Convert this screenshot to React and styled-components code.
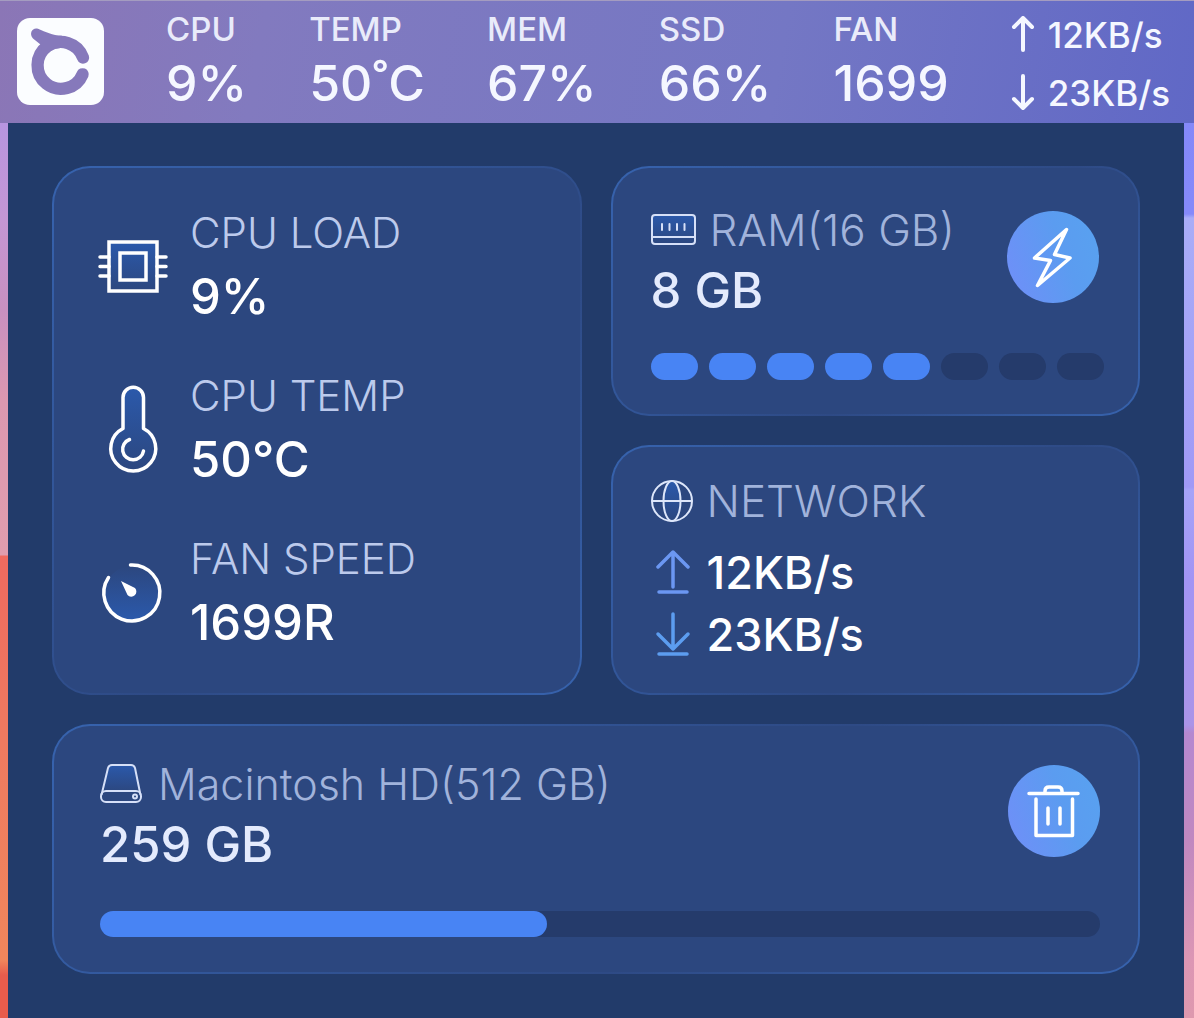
import React from "react";
import styled, { createGlobalStyle } from "styled-components";

const Global = createGlobalStyle`
  * { box-sizing: border-box; }
  body {
    margin: 0;
    font-family: Inter, "Liberation Sans", sans-serif;
    color: #fff;
  }
`;

const Desktop = styled.div`
  min-height: 100vh;
  display: flex;
  flex-direction: column;
  background:
    linear-gradient(#b795e0 0, #b795e0 120px, #c496d4 220px, #c890c0 310px, #dc98b0 400px, #e09dae 555px, #ef6a5f 556px, #ef7a60 740px, #f0865c 960px, #e85c4c 975px, #e85c4c) left / 50% 100% no-repeat,
    linear-gradient(#8388f8 0, #8589fa 214px, #a9adf8 218px, #a099f6 487px, #a5a3f8 490px, #a294f4 580px, #aa94e8 725px, #b588d0 733px, #c088c0 840px, #dc96b4 960px, #de98ae) right / 50% 100% no-repeat;
`;

const MenuBar = styled.header`
  display: flex;
  justify-content: space-between;
  height: 123px;
  padding: 0 24px 0 17px;
  border-top: 1px solid #a49cc0;
  background: linear-gradient(100deg, #8b76b6 0%, #827abf 22%, #7477c4 65%, #6068c6 100%);
`;

const Logo = styled.svg`
  width: 87px;
  height: 87px;
  margin-top: 17px;
`;

const Stat = styled.div`
  display: flex;
  flex-direction: column;
  padding-top: 8px;
`;

const StatName = styled.span`
  font-size: 33px;
  line-height: 40px;
  font-weight: 500;
  color: #e9ebfa;
`;

const StatValue = styled.span`
  font-size: 50px;
  line-height: 68px;
  font-weight: 500;
  color: #f5f7ff;
`;

const Rates = styled.div`
  display: flex;
  flex-direction: column;
  padding-top: 5px;
`;

const Rate = styled.span`
  display: flex;
  align-items: center;
  gap: 13px;
  font-size: 35px;
  line-height: 58px;
  font-weight: 500;
  color: #f5f7ff;
`;

const RateArrow = styled.svg`
  width: 24px;
  height: 38px;
`;

const Panel = styled.main`
  flex: 1;
  display: grid;
  grid-template-columns: 1fr 1fr;
  align-content: start;
  gap: 29px;
  margin: 0 10px 0 8px;
  padding: 43px 44px;
  background: #223b6a;
`;

const Card = styled.section`
  min-height: 250px;
  padding: ${(p) => p.$pad || "38px"};
  grid-column: ${(p) => (p.$wide ? "1 / -1" : "auto")};
  grid-row: ${(p) => (p.$tall ? "span 2" : "auto")};
  border: 2px solid transparent;
  border-radius: 38px;
  background:
    linear-gradient(#2c477f, #2c477f) padding-box,
    linear-gradient(135deg, #3763ae 0%, #325699 30%, #2e4a85 60%, #3763ae 100%) border-box;
`;

const Readings = styled.dl`
  display: flex;
  flex-direction: column;
  gap: 35px;
  margin: 0;
`;

const Reading = styled.div`
  display: grid;
  grid-template-columns: 70px 1fr;
  column-gap: 22px;
  align-items: center;
`;

const ReadingIcon = styled.svg`
  grid-row: span 2;
  width: 70px;
  height: 90px;
`;

const ReadingName = styled.dt`
  font-size: 42px;
  line-height: 64px;
  font-weight: 300;
  color: #bccaec;
`;

const ReadingValue = styled.dd`
  margin: 0;
  font-size: 49px;
  line-height: 64px;
  font-weight: 500;
`;

const CardHead = styled.div`
  display: flex;
  justify-content: space-between;
  align-items: flex-start;
`;

const Title = styled.h2`
  display: flex;
  align-items: center;
  gap: ${(p) => (p.$small ? 16 : 14)}px;
  margin: 0;
  font-size: ${(p) => (p.$small ? 43 : 44)}px;
  line-height: 52px;
  font-weight: 300;
  color: #a1b3db;
`;

const TitleIcon = styled.svg`
  width: ${(p) => p.$w}px;
  height: 46px;
`;

const Amount = styled.p`
  margin: 0;
  font-size: 49px;
  line-height: 70px;
  font-weight: 500;
  color: #e4ebfd;
`;

const RoundButton = styled.button`
  width: 92px;
  height: 92px;
  margin-top: 7px;
  margin-right: ${(p) => p.$inset || 0}px;
  padding: 0;
  border: 0;
  border-radius: 50%;
  background: linear-gradient(70deg, #6f8ff8 5%, #5b9cf0 60%, #58a2f0 100%);
  cursor: pointer;

  svg { display: block; }
`;

const Pills = styled.div`
  display: grid;
  grid-template-columns: repeat(8, 1fr);
  gap: 11px;
  margin-top: 27px;
`;

const Pill = styled.span`
  height: 27px;
  border-radius: 14px;
  background: ${(p) => (p.$on ? "#4884f4" : "#253b6b")};
`;

const Speeds = styled.div`
  display: flex;
  flex-direction: column;
  padding-top: 15px;
`;

const Speed = styled.p`
  display: flex;
  align-items: center;
  gap: 14px;
  margin: 0;
  font-size: 45px;
  line-height: 62px;
  font-weight: 500;
`;

const SpeedIcon = styled.svg`
  width: 42px;
  height: 46px;
`;

const Track = styled.div`
  height: 26px;
  margin-top: 31px;
  border-radius: 13px;
  background: #253b6b;
`;

const Fill = styled.div`
  height: 100%;
  border-radius: 13px;
  background: #4884f4;
`;

const diskUsed = 44.7;

const stats = [
  ["CPU", "9%"],
  ["TEMP", "50˚C"],
  ["MEM", "67%"],
  ["SSD", "66%"],
  ["FAN", "1699"],
];

const Glow = ({ id, up }) => (
  <defs>
    <linearGradient id={id} x1="0" x2="0" y1={up ? 1 : 0} y2={up ? 0 : 1}>
      <stop offset="0" stopColor="#2b59ab" />
      <stop offset="1" stopColor="#2c477f" />
    </linearGradient>
  </defs>
);

const ChipIcon = () => (
  <ReadingIcon viewBox="0 0 70 90" fill="none" stroke="#fff" strokeWidth="3.5" strokeLinecap="round">
    <Glow id="chip" />
    <rect x="11" y="22" width="48" height="49" fill="url(#chip)" />
    <rect x="22" y="33" width="26" height="27" />
    <path d="M2 37h9M2 46.500h9M2 56h9M59 37h9M59 46.500h9M59 56h9" />
  </ReadingIcon>
);

const ThermometerIcon = () => (
  <ReadingIcon viewBox="0 0 70 90" fill="none" stroke="#fff" strokeWidth="3.5" strokeLinecap="round" strokeLinejoin="round">
    <Glow id="thermo" />
    <path d="M25 45.500V14.500a10.250 10.250 0 0 1 20.500 0V45.500a22.500 22.500 0 1 1-20.500 0z" fill="url(#thermo)" />
    <path d="M31.500 56.500a10.500 10.500 0 1 0 14 11.500" />
  </ReadingIcon>
);

const GaugeIcon = () => (
  <ReadingIcon viewBox="0 0 70 90" fill="none" stroke="#fff" strokeWidth="3.5" strokeLinecap="round">
    <Glow id="gauge" up />
    <circle cx="33.500" cy="47" r="27" fill="url(#gauge)" stroke="none" />
    <path d="M32.500 19a28 28 0 1 1-22 12.500" />
    <path d="M23 35l14 7a5 5 0 1 1-7.500 7z" fill="#fff" stroke="none" />
  </ReadingIcon>
);

const Arrow = ({ down }) => (
  <RateArrow viewBox="0 0 24 38" fill="none" stroke="#f5f7ff" strokeWidth="4" strokeLinecap="round" strokeLinejoin="round">
    <path d={down ? "M12 2v32M3 25l9 9 9-9" : "M12 34V2M3 11l9-9 9 9"} />
  </RateArrow>
);

export default function App() {
  return (
    <>
      <Global />
      <Desktop>
        <MenuBar>
          <Logo viewBox="0 0 87 87" role="img" aria-label="Logo">
            <rect width="87" height="87" rx="13" fill="#fbfdff" />
            <path d="M66 39.500A23.400 23.400 0 1 0 65.600 56.300" fill="none" stroke="#8679bb" strokeWidth="12.300" strokeLinecap="round" />
            <path d="M21 10.800C29 14 35 17.500 45 17.700L43 30 25 33 23.500 26.500 16 20.500C11.500 15.500 15.500 9 21 10.800z" fill="#8679bb" />
          </Logo>
          {stats.map(([name, value]) => (
            <Stat key={name}>
              <StatName>{name}</StatName>
              <StatValue>{value}</StatValue>
            </Stat>
          ))}
          <Rates>
            <Rate><Arrow />12KB/s</Rate>
            <Rate><Arrow down />23KB/s</Rate>
          </Rates>
        </MenuBar>

        <Panel>
          <Card $tall $pad="33px 44px">
            <Readings>
              <Reading>
                <ChipIcon />
                <ReadingName>CPU LOAD</ReadingName>
                <ReadingValue>9%</ReadingValue>
              </Reading>
              <Reading>
                <ThermometerIcon />
                <ReadingName>CPU TEMP</ReadingName>
                <ReadingValue>50°C</ReadingValue>
              </Reading>
              <Reading>
                <GaugeIcon />
                <ReadingName>FAN SPEED</ReadingName>
                <ReadingValue>1699R</ReadingValue>
              </Reading>
            </Readings>
          </Card>

          <Card $pad="36px 34px 32px 38px">
            <CardHead>
              <div>
                <Title>
                  <TitleIcon $w={45} viewBox="0 0 45 46" fill="none" stroke="#d6e0f8" strokeWidth="2" strokeLinecap="round">
                    <Glow id="ram" />
                    <rect x="1" y="8" width="43" height="29" rx="3" fill="url(#ram)" />
                    <path d="M1 30h43M11 17v6M18.500 17v6M26 17v6M33.500 17v6" />
                  </TitleIcon>
                  RAM(16 GB)
                </Title>
                <Amount>8 GB</Amount>
              </div>
              <RoundButton type="button" aria-label="Free memory" $inset={5}>
                <svg width="92" height="92" viewBox="0 0 92 92" fill="none" stroke="#fff" strokeWidth="3.5" strokeLinejoin="round">
                  <path d="M59.500 18.500L27.500 47l16 2.500L30.500 74.500 63 47l-15.500-3.500z" />
                </svg>
              </RoundButton>
            </CardHead>
            <Pills role="meter" aria-label="Memory used" aria-valuenow={5} aria-valuemin={0} aria-valuemax={8}>
              {Array.from({ length: 8 }, (_, i) => <Pill key={i} $on={i < 5} />)}
            </Pills>
          </Card>

          <Card $pad="28px 38px 24px">
            <Title>
              <TitleIcon $w={42} viewBox="0 0 42 46" fill="none" stroke="#dde6fa" strokeWidth="2">
                <Glow id="globe" />
                <circle cx="21" cy="23" r="20" />
                <ellipse cx="21" cy="23" rx="8.500" ry="20" fill="url(#globe)" />
                <path d="M1 23h40" />
              </TitleIcon>
              NETWORK
            </Title>
            <Speeds>
              <Speed>
                <SpeedIcon viewBox="0 0 42 46" fill="none" stroke="#6b97f2" strokeWidth="3.5" strokeLinecap="round" strokeLinejoin="round">
                  <path d="M22 37V2M7 17L22 2l15 15M8 42h28" />
                </SpeedIcon>
                12KB/s
              </Speed>
              <Speed>
                <SpeedIcon viewBox="0 0 42 46" fill="none" stroke="#5c9df0" strokeWidth="3.5" strokeLinecap="round" strokeLinejoin="round">
                  <path d="M22 2v35M7 22l15 15 15-15M8 42h28" />
                </SpeedIcon>
                23KB/s
              </Speed>
            </Speeds>
          </Card>

          <Card $wide $pad="32px 38px 34px 46px">
            <CardHead>
              <div>
                <Title $small>
                  <TitleIcon $w={42} viewBox="0 0 42 46" fill="none" stroke="#d6e0f8" strokeWidth="2" strokeLinejoin="round">
                    <Glow id="disk" />
                    <path d="M2 31L9 7q1-3 4-3h17q3 0 4 3l7 24z" fill="url(#disk)" stroke="none" />
                    <path d="M1.500 34L8 7q1-3 4-3h19q3 0 4 3l5.500 27" />
                    <rect x="1" y="30" width="40" height="11" rx="5" />
                    <circle cx="35" cy="35.500" r="2" />
                  </TitleIcon>
                  Macintosh HD(512 GB)
                </Title>
                <Amount>259 GB</Amount>
              </div>
              <RoundButton type="button" aria-label="Clean disk">
                <svg width="92" height="92" viewBox="0 0 92 92" fill="none" stroke="#fff" strokeWidth="3.5" strokeLinecap="round" strokeLinejoin="round">
                  <path d="M21 28.500h49M37 28v-2q0-4 4-4h9q4 0 4 4v2M28 34v36.500h36.500V34M40 43v16M52 43v16" />
                </svg>
              </RoundButton>
            </CardHead>
            <Track role="meter" aria-label="Disk used" aria-valuenow={diskUsed} aria-valuemin={0} aria-valuemax={100}>
              <Fill style={{ width: `${diskUsed}%` }} />
            </Track>
          </Card>
        </Panel>
      </Desktop>
    </>
  );
}
